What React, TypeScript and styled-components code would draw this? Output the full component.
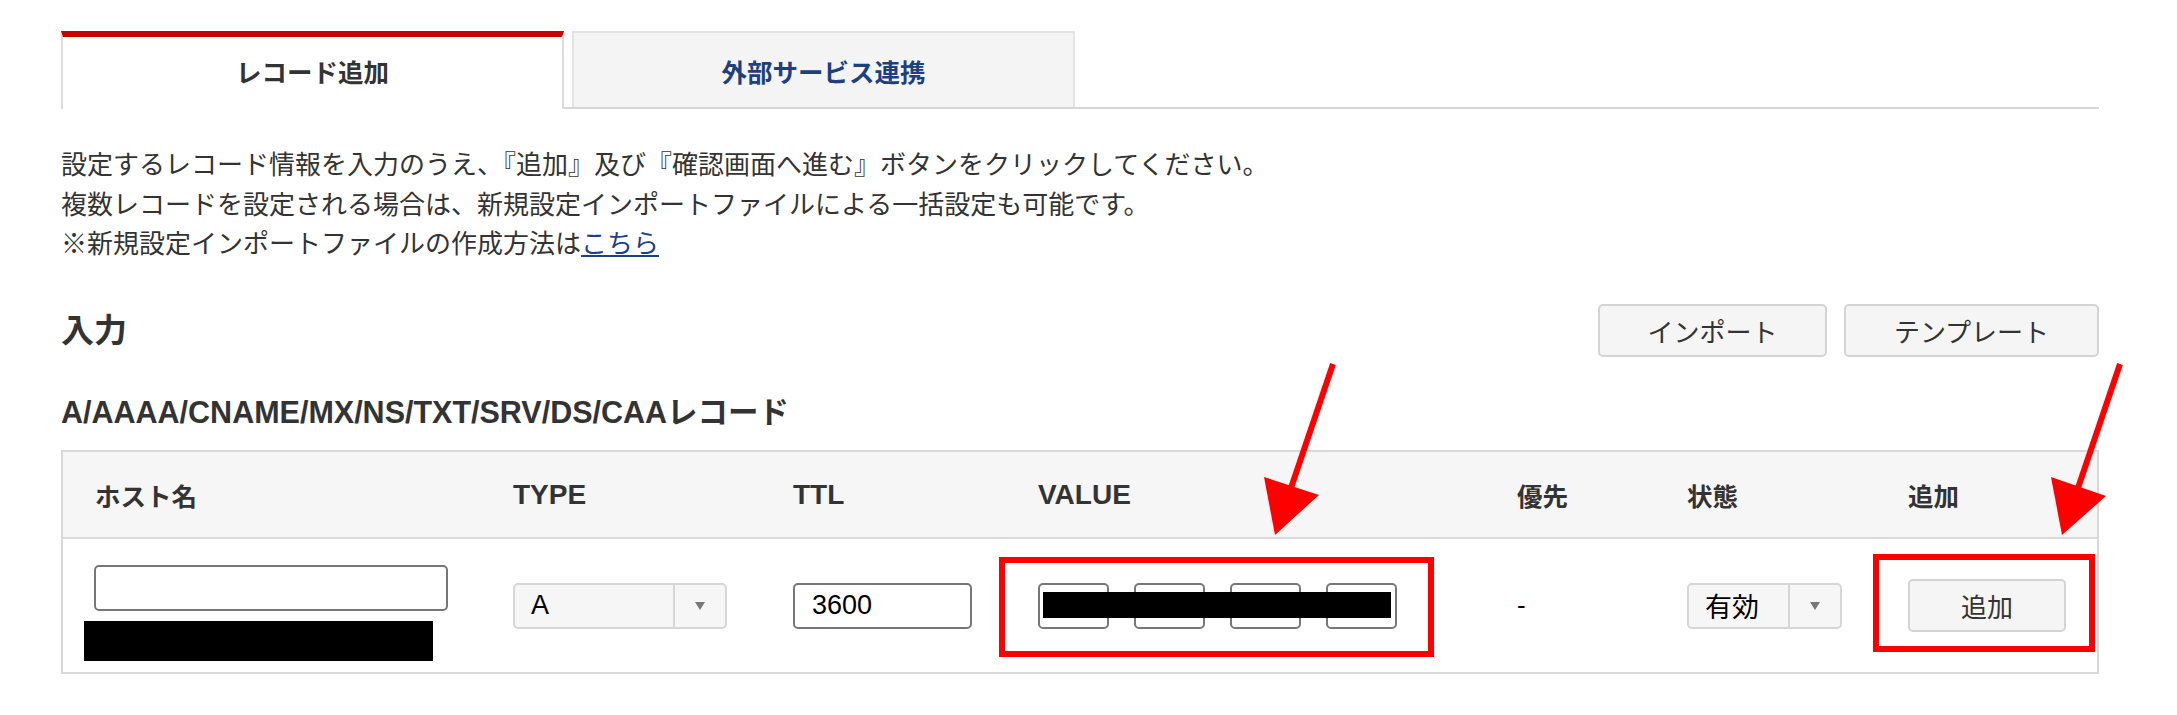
import styled, { createGlobalStyle, css } from 'styled-components';

const GlobalStyle = createGlobalStyle`
  html, body {
    margin: 0;
    padding: 0;
    background: #fff;
  }
  body {
    font-family: "Liberation Sans", "Noto Sans CJK JP", sans-serif;
    color: #333;
  }
`;

const Page = styled.div`
  position: relative;
  width: 2038px;
  padding: 31px 0 0 61px;
`;

const TabBar = styled.div`
  display: flex;
  align-items: flex-end;
  gap: 8px;
  height: 76px;
  border-bottom: 2px solid #d6d6d6;
`;

const Tab = styled.div<{ $active?: boolean }>`
  box-sizing: border-box;
  width: 503px;
  display: flex;
  align-items: center;
  justify-content: center;
  font-size: 25.5px;
  font-weight: bold;
  ${({ $active }) =>
    $active
      ? css`
          height: 78px;
          margin-bottom: -2px;
          padding-bottom: 6px;
          background: #fff;
          color: #333;
          border-top: 6px solid #cc0000;
          border-left: 2px solid #dcdcdc;
          border-right: 2px solid #dcdcdc;
        `
      : css`
          height: 76px;
          background: #f4f4f4;
          color: #1e3f80;
          border: 2px solid #e3e3e3;
          border-bottom: none;
        `}
`;

const Intro = styled.div`
  margin-top: 37px;
  font-size: 26px;
  line-height: 39.5px;
`;

const Link = styled.a`
  color: #1b3f8b;
  text-decoration: underline;
`;

const HeadingRow = styled.div`
  margin-top: 39.5px;
  height: 53px;
  display: flex;
  align-items: center;
  justify-content: space-between;
`;

const Heading = styled.h2`
  margin: 0;
  font-size: 33px;
  line-height: 1;
  font-weight: bold;
`;

const ButtonGroup = styled.div`
  display: flex;
  gap: 17px;
`;

const Button = styled.button<{ $width: number }>`
  box-sizing: border-box;
  width: ${({ $width }) => $width}px;
  height: 53px;
  padding: 0;
  background: #f5f5f5;
  border: 2px solid #d4d4d4;
  border-radius: 5px;
  font-family: inherit;
  font-size: 26px;
  color: #333;
`;

const SubHeading = styled.h3`
  margin: 35px 0 18px;
  font-size: 30.5px;
  line-height: 40px;
  font-weight: bold;
`;

const Table = styled.div`
  border: 2px solid #d9d9d9;
`;

const Row = styled.div<{ $header?: boolean }>`
  display: grid;
  grid-template-columns: 418px 280px 245px 479px 170px 221px 221px;
  align-items: center;
  ${({ $header }) =>
    $header
      ? css`
          height: 85px;
          background: #f6f6f6;
          border-bottom: 2px solid #d9d9d9;
          font-weight: bold;
        `
      : css`
          height: 133px;
          font-size: 26px;
          color: #000;
        `}
`;

const Cell = styled.div<{ $top?: boolean }>`
  position: relative;
  padding-left: 32px;
  ${({ $top }) =>
    $top &&
    css`
      align-self: start;
      padding-top: 26px;
      padding-left: 31px;
    `}
`;

const HeaderLabel = styled.span<{ $latin?: boolean }>`
  font-size: ${({ $latin }) => ($latin ? '28px' : '25.5px')};
`;

const TextInput = styled.input<{ $width: number }>`
  display: block;
  box-sizing: border-box;
  width: ${({ $width }) => $width}px;
  height: 46px;
  padding: 0 17px;
  border: 2px solid #777;
  border-radius: 5px;
  background: #fff;
  font-family: inherit;
  font-size: 27px;
  color: #000;
  outline: none;
`;

const Redaction = styled.div`
  width: 349px;
  height: 40px;
  margin: 10px 0 0 -10px;
  background: #000;
`;

const ValueGroup = styled.div`
  display: flex;
  gap: 25px;
`;

const ValueRedaction = styled.div`
  position: absolute;
  top: 9px;
  left: 37px;
  width: 348px;
  height: 26px;
  background: #000;
`;

const Select = styled.div<{ $width: number }>`
  box-sizing: border-box;
  display: flex;
  width: ${({ $width }) => $width}px;
  height: 46px;
  border: 2px solid #d6d6d6;
  border-radius: 5px;
  background: #f6f6f6;
`;

const SelectValue = styled.div`
  flex: 1;
  display: flex;
  align-items: center;
  padding-left: 16px;
  font-size: 27px;
`;

const SelectArrow = styled.div`
  box-sizing: border-box;
  width: 52px;
  border-left: 2px solid #d6d6d6;
  display: flex;
  align-items: center;
  justify-content: center;
  &::after {
    content: '';
    border-left: 5px solid transparent;
    border-right: 5px solid transparent;
    border-top: 8px solid #777;
  }
`;

const Overlay = styled.svg`
  position: absolute;
  top: 0;
  left: 0;
  pointer-events: none;
  overflow: visible;
`;

const headers = [
  { label: 'ホスト名' },
  { label: 'TYPE', latin: true },
  { label: 'TTL', latin: true },
  { label: 'VALUE', latin: true },
  { label: '優先' },
  { label: '状態' },
  { label: '追加' },
];

const App = () => {
  return (
    <>
      <GlobalStyle />
      <Page>
        <TabBar>
          <Tab $active>レコード追加</Tab>
          <Tab>外部サービス連携</Tab>
        </TabBar>

        <Intro>
          <div>設定するレコード情報を入力のうえ、『追加』及び『確認画面へ進む』ボタンをクリックしてください。</div>
          <div>複数レコードを設定される場合は、新規設定インポートファイルによる一括設定も可能です。</div>
          <div>
            ※新規設定インポートファイルの作成方法は<Link href="#">こちら</Link>
          </div>
        </Intro>

        <HeadingRow>
          <Heading>入力</Heading>
          <ButtonGroup>
            <Button $width={229}>インポート</Button>
            <Button $width={255}>テンプレート</Button>
          </ButtonGroup>
        </HeadingRow>

        <SubHeading>A/AAAA/CNAME/MX/NS/TXT/SRV/DS/CAAレコード</SubHeading>

        <Table>
          <Row $header>
            {headers.map((h) => (
              <Cell key={h.label}>
                <HeaderLabel $latin={h.latin}>{h.label}</HeaderLabel>
              </Cell>
            ))}
          </Row>
          <Row>
            <Cell $top>
              <TextInput $width={354} />
              <Redaction />
            </Cell>
            <Cell>
              <Select $width={214}>
                <SelectValue>A</SelectValue>
                <SelectArrow />
              </Select>
            </Cell>
            <Cell>
              <TextInput $width={179} defaultValue="3600" />
            </Cell>
            <Cell>
              <ValueGroup>
                <TextInput $width={71} />
                <TextInput $width={71} />
                <TextInput $width={71} />
                <TextInput $width={71} />
              </ValueGroup>
              <ValueRedaction />
            </Cell>
            <Cell>-</Cell>
            <Cell>
              <Select $width={155}>
                <SelectValue>有効</SelectValue>
                <SelectArrow />
              </Select>
            </Cell>
            <Cell>
              <Button $width={158}>追加</Button>
            </Cell>
          </Row>
        </Table>

        <Overlay width={2177} height={715} viewBox="0 0 2177 715">
          <rect x={1002} y={560} width={429} height={94} fill="none" stroke="#ff0000" strokeWidth={6} />
          <rect x={1876} y={557} width={216} height={92} fill="none" stroke="#ff0000" strokeWidth={6} />
          <line x1={1333} y1={364} x2={1291} y2={488} stroke="#ff0000" strokeWidth={6} />
          <polygon points="1264,477 1319,495 1275,535" fill="#ff0000" />
          <line x1={2120} y1={364} x2={2078} y2={488} stroke="#ff0000" strokeWidth={6} />
          <polygon points="2051,477 2106,496 2062,535" fill="#ff0000" />
        </Overlay>
      </Page>
    </>
  );
};

export default App;
